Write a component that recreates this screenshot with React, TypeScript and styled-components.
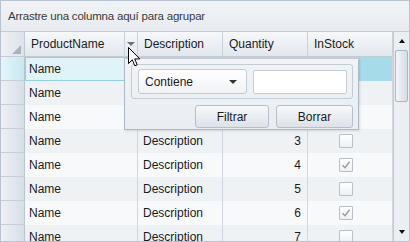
import React from 'react';
import styled, { createGlobalStyle } from 'styled-components';

const GlobalStyle = createGlobalStyle`
  body {
    margin: 0;
    font-family: "Liberation Sans", Arial, sans-serif;
    font-size: 12px;
    color: #1b1b1b;
  }
`;

const Frame = styled.div`
  position: relative;
  width: 410px;
  height: 242px;
  box-sizing: border-box;
  border: 1px solid #b9c3cf;
  background: #ffffff;
  overflow: hidden;
`;

const GroupPanel = styled.div`
  height: 31px;
  box-sizing: border-box;
  padding-left: 7px;
  display: flex;
  align-items: center;
  background: linear-gradient(#f1f3f6, #e7ebf0);
  border-bottom: 1px solid #c4ccd6;
  color: #3a3a3a;
  font-size: 11.5px;
  letter-spacing: -0.2px;
`;

const Body = styled.div`
  display: flex;
  height: 209px;
`;

const Main = styled.div`
  flex: 1;
  display: flex;
  flex-direction: column;
  overflow: hidden;
`;

const cols = '24px 113px 85px 85px 85px';

const HeaderRow = styled.div`
  display: grid;
  grid-template-columns: ${cols};
  height: 25px;
  flex-shrink: 0;
  background: linear-gradient(#f6f8fa, #e2e7ed);
  border-bottom: 1px solid #c3cbd5;
  box-sizing: border-box;
`;

const HeaderCell = styled.div<{ $filter?: boolean }>`
  display: flex;
  align-items: center;
  padding-left: 6px;
  padding-right: ${p => (p.$filter ? '0' : '4px')};
  border-right: 1px solid #c9d1db;
  color: #1b1b1b;
`;

const CornerCell = styled.div`
  position: relative;
  border-right: 1px solid #c0c9d4;
  background: linear-gradient(to right, #eef1f5, #dde3ea);
`;

const CornerMark = styled.div`
  position: absolute;
  right: 3px;
  bottom: 2px;
  width: 0;
  height: 0;
  border-left: 9px solid transparent;
  border-bottom: 9px solid #aab3be;
`;

const HeaderLabel = styled.span`
  flex: 1;
`;

const FilterButton = styled.div`
  width: 12px;
  align-self: stretch;
  display: flex;
  align-items: center;
  justify-content: center;
  border-left: 1px solid #c9d1db;
`;

const FilterArrow = styled.div`
  width: 0;
  height: 0;
  border-left: 4px solid transparent;
  border-right: 4px solid transparent;
  border-top: 4px solid #6d747c;
  margin-top: -1px;
`;

const Row = styled.div<{ $alt: boolean; $selected: boolean }>`
  display: grid;
  grid-template-columns: ${cols};
  height: 24px;
  flex-shrink: 0;
  background: ${p => (p.$selected ? '#a6dce9' : p.$alt ? '#eef2f5' : '#f8f9fb')};
`;

const Indicator = styled.div<{ $selected: boolean }>`
  box-sizing: border-box;
  border-right: 1px solid #bac4cf;
  border-bottom: 1px solid #c6ced8;
  background: ${p =>
    p.$selected
      ? 'linear-gradient(to right, #e6f6fa, #c4e8f1)'
      : 'linear-gradient(to right, #eef1f5, #d7dee6)'};
`;

const Cell = styled.div<{ $align?: 'left' | 'right' | 'center'; $current?: boolean; $pad?: number }>`
  display: flex;
  align-items: center;
  box-sizing: border-box;
  justify-content: ${p =>
    p.$align === 'right' ? 'flex-end' : p.$align === 'center' ? 'center' : 'flex-start'};
  padding: ${p =>
    p.$align === 'right' || p.$align === 'center' ? '0 6px 0 0' : `0 0 0 ${p.$pad ?? 4}px`};
  border-right: 1px solid #cfd6df;
  color: #1b1b1b;
  ${p =>
    p.$current &&
    `
    background: #e0f3f8;
    border: 1px solid #8fd0e2;
    padding-left: 3px;
  `}
`;

const Check = styled.div`
  width: 12px;
  height: 12px;
  border: 1px solid #b8c0ca;
  border-radius: 1px;
  background: linear-gradient(#ffffff, #eef1f4);
  display: flex;
  align-items: center;
  justify-content: center;
  margin-right: 2px;
`;

const ScrollBar = styled.div`
  width: 15px;
  flex-shrink: 0;
  display: flex;
  flex-direction: column;
  background: #eceef2;
  border-left: 1px solid #c3cbd5;
`;

const ScrollArrow = styled.div<{ $down?: boolean }>`
  height: 18px;
  display: flex;
  align-items: center;
  justify-content: center;
  &::after {
    content: '';
    width: 0;
    height: 0;
    border-left: 3px solid transparent;
    border-right: 3px solid transparent;
    ${p => (p.$down ? 'border-top: 4px solid #111;' : 'border-bottom: 4px solid #111;')}
  }
`;

const Thumb = styled.div`
  height: 50px;
  margin: 0 1px;
  border: 1px solid #a9b5c3;
  border-radius: 2px;
  background: linear-gradient(to right, #f3f5f8, #d7dde5);
`;

const Track = styled.div`
  flex: 1;
`;

const Popup = styled.div`
  position: absolute;
  left: 123px;
  top: 57px;
  width: 235px;
  height: 72px;
  box-sizing: border-box;
  padding: 5px 5px 0 6px;
  background: linear-gradient(#f1f3f6, #e9edf1);
  border: 1px solid #aeb9c6;
  border-top-color: #c3cbd5;
  box-shadow: 1px 1px 2px rgba(0, 0, 0, 0.12);
  display: flex;
  flex-direction: column;
  gap: 6px;
`;

const Group = styled.div`
  height: 35px;
  box-sizing: border-box;
  border: 1px solid #c4ccd6;
  border-radius: 3px;
  display: flex;
  align-items: center;
  gap: 6px;
  padding: 0 5px 0 6px;
`;

const Select = styled.div`
  width: 109px;
  height: 25px;
  box-sizing: border-box;
  border: 1px solid #c3cbd5;
  border-radius: 3px;
  background: linear-gradient(#ffffff, #f0f2f5);
  display: flex;
  align-items: center;
  justify-content: space-between;
  padding: 0 9px 0 6px;
  color: #1b1b1b;
  &::after {
    content: '';
    width: 0;
    height: 0;
    border-left: 4px solid transparent;
    border-right: 4px solid transparent;
    border-top: 4px solid #333;
  }
`;

const TextBox = styled.div`
  width: 95px;
  height: 24px;
  box-sizing: border-box;
  border: 1px solid #c3cbd5;
  border-radius: 2px;
  background: #ffffff;
`;

const Buttons = styled.div`
  display: flex;
  justify-content: flex-end;
  gap: 7px;
`;

const Button = styled.div<{ $w: number }>`
  width: ${p => p.$w}px;
  height: 23px;
  box-sizing: border-box;
  border: 1px solid #b6c0cc;
  border-radius: 3px;
  background: linear-gradient(#f7f8fa, #dde2e8);
  display: flex;
  align-items: center;
  justify-content: center;
  color: #1b1b1b;
`;

const Cursor = styled.svg`
  position: absolute;
  left: 127px;
  top: 46px;
`;

const rows = Array.from({ length: 8 }, (_, i) => ({
  name: 'Name',
  description: 'Description',
  quantity: i,
  inStock: i % 2 === 0,
}));

export default function App() {
  return (
    <>
      <GlobalStyle />
      <Frame>
        <GroupPanel>Arrastre una columna aquí para agrupar</GroupPanel>
        <Body>
          <Main>
            <HeaderRow>
              <CornerCell>
                <CornerMark />
              </CornerCell>
              <HeaderCell $filter>
                <HeaderLabel>ProductName</HeaderLabel>
                <FilterButton>
                  <FilterArrow />
                </FilterButton>
              </HeaderCell>
              <HeaderCell>Description</HeaderCell>
              <HeaderCell>Quantity</HeaderCell>
              <HeaderCell>InStock</HeaderCell>
            </HeaderRow>
            {rows.map((r, i) => (
              <Row key={i} $alt={i % 2 === 1} $selected={i === 0}>
                <Indicator $selected={i === 0} />
                <Cell $current={i === 0}>{r.name}</Cell>
                <Cell $pad={5}>{r.description}</Cell>
                <Cell $align="right">{r.quantity}</Cell>
                <Cell $align="center">
                  <Check>
                    {r.inStock && (
                      <svg width="10" height="10" viewBox="0 0 10 10">
                        <path d="M1.5 5.2 L4 7.8 L8.6 1.8" fill="none" stroke="#9a9a9a" strokeWidth="1.4" />
                      </svg>
                    )}
                  </Check>
                </Cell>
              </Row>
            ))}
          </Main>
          <ScrollBar>
            <ScrollArrow />
            <Thumb />
            <Track />
            <ScrollArrow $down />
          </ScrollBar>
        </Body>
        <Popup>
          <Group>
            <Select>Contiene</Select>
            <TextBox />
          </Group>
          <Buttons>
            <Button $w={74}>Filtrar</Button>
            <Button $w={77}>Borrar</Button>
          </Buttons>
        </Popup>
        <Cursor width="13" height="21" viewBox="0 0 13 21">
          <path
            d="M0.5 0.5 L0.5 16.5 L4.3 12.8 L6.8 18.8 L9.2 17.8 L6.7 11.9 L11.8 11.9 Z"
            fill="#ffffff"
            stroke="#000000"
            strokeWidth="1"
            strokeLinejoin="round"
          />
        </Cursor>
      </Frame>
    </>
  );
}
